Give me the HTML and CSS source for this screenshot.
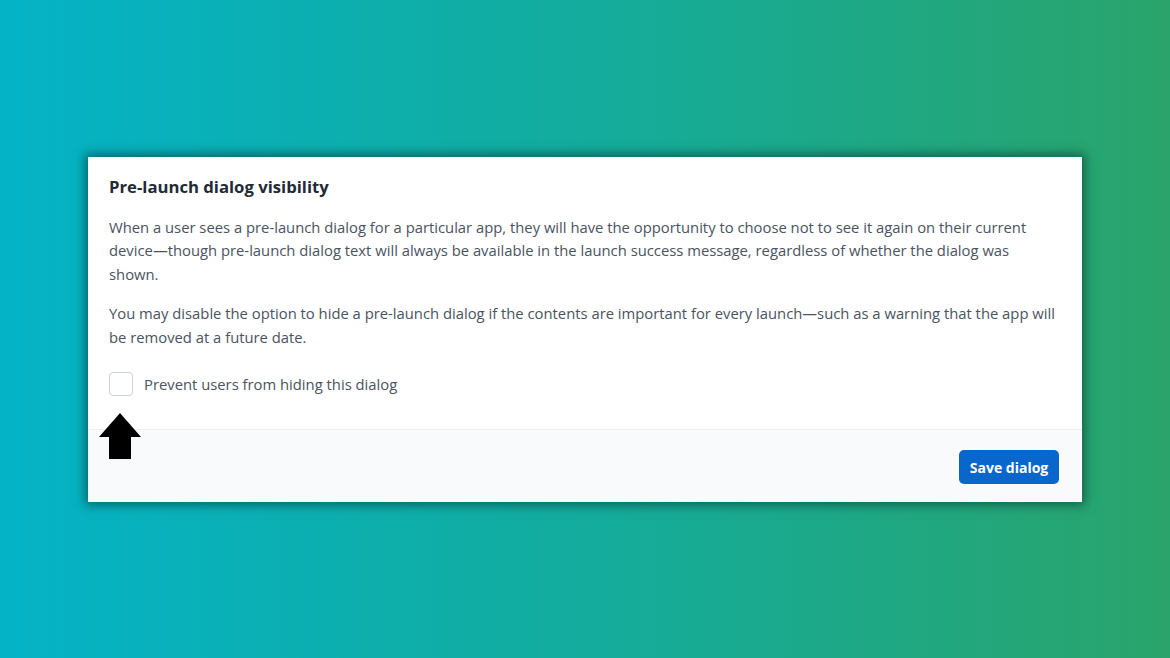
FILE: index.html
```html
<!DOCTYPE html>
<html>
<head>
<meta charset="utf-8">
<link rel="stylesheet" href="styles.css">
</head>
<body>
<div class="stage">
  <div class="card">
    <div class="card-body">
      <h2 class="title">Pre-launch dialog visibility</h2>
      <p class="text">When a user sees a pre-launch dialog for a particular app, they will have the opportunity to choose not to see it again on their current device—though pre-launch dialog text will always be available in the launch success message, regardless of whether the dialog was shown.</p>
      <p class="text">You may disable the option to hide a pre-launch dialog if the contents are important for every launch—such as a warning that the app will be removed at a future date.</p>
      <label class="check-row">
        <span class="checkbox"></span>
        <span class="check-label">Prevent users from hiding this dialog</span>
      </label>
    </div>
    <div class="card-footer">
      <button class="btn">Save dialog</button>
    </div>
    <svg class="arrow" width="42" height="46" viewBox="0 0 42 46">
      <path d="M21 0 L42 24 L32 24 L32 46 L10 46 L10 24 L0 24 Z" fill="#000"/>
    </svg>
  </div>
</div>
</body>
</html>
```

FILE: styles.css
```css
* { box-sizing: border-box; }
html, body { margin: 0; padding: 0; }
body {
  width: 1170px;
  height: 658px;
  overflow: hidden;
  font-family: "Open Sans", "Noto Sans", sans-serif;
}
.stage {
  width: 1170px;
  height: 658px;
  background: linear-gradient(90deg, #04b3c7 0%, #13ac9d 50%, #2aa46b 100%);
  padding-top: 157px;
  padding-left: 88px;
}
.card {
  position: relative;
  width: 994px;
  height: 345px;
  background: #fff;
  box-shadow: 0 0 10px 3px rgba(0, 40, 40, 0.55);
  display: flex;
  flex-direction: column;
}
.card-body {
  padding: 18px 21px 0 21px;
  height: 273px;
  border-bottom: 1px solid #eef0f2;
}
.title {
  margin: 0;
  font-size: 16.7px;
  font-weight: 700;
  color: #1f2a37;
  line-height: 24px;
}
.text {
  margin: 17px 0 0 0;
  font-size: 14.8px;
  line-height: 23.4px;
  color: #4a5361;
}
.text + .text { margin-top: 16px; }
.check-row {
  display: flex;
  align-items: center;
  margin-top: 23px;
}
.checkbox {
  width: 24px;
  height: 24px;
  border: 1.5px solid #ccd2da;
  border-radius: 4px;
  background: #fff;
}
.check-label {
  margin-left: 11px;
  font-size: 14.8px;
  color: #4a5361;
}
.card-footer {
  flex: 1;
  background: #f9fafb;
  display: flex;
  justify-content: flex-end;
  align-items: flex-start;
  padding: 20px 23px 0 0;
}
.btn {
  width: 100px;
  height: 34px;
  border: none;
  border-radius: 5px;
  background: #0967cc;
  color: #fff;
  font-family: "Open Sans", "Noto Sans", sans-serif;
  font-weight: 700;
  font-size: 14px;
  padding: 0;
}
.arrow {
  position: absolute;
  left: 11px;
  top: 256px;
}
```
